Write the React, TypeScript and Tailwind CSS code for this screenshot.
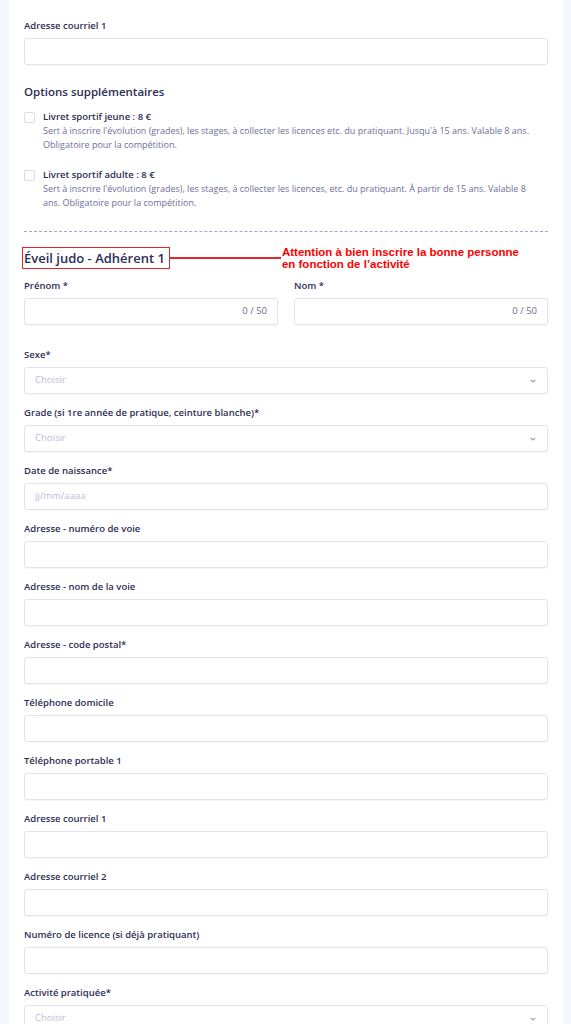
import React from 'react';

const font = { fontFamily: '"Open Sans", "Liberation Sans", sans-serif' };

const Label: React.FC<{ text: string }> = ({ text }) => (
    <div className="text-[9.5px] leading-[14px] font-semibold text-[#2d2d55]">{text}</div>
);

const TextField: React.FC<{ label: string; placeholder?: string; counter?: boolean }> = ({ label, placeholder, counter }) => (
    <div className="flex flex-col gap-[5px]">
        <Label text={label} />
        <div className="h-[27px] rounded-[3px] border border-[#e3e3eb] bg-white flex items-center justify-between px-[10px] shadow-[0_1px_1px_rgba(0,0,0,0.03)]">
            <span className="text-[9.5px] text-[#bcbcd4]">{placeholder}</span>
            {counter && <span className="text-[9.5px] text-[#6c6c8c]">0 / 50</span>}
        </div>
    </div>
);

const SelectField: React.FC<{ label: string }> = ({ label }) => (
    <div className="flex flex-col gap-[5px]">
        <Label text={label} />
        <div className="h-[27px] rounded-[3px] border border-[#e3e3eb] bg-white flex items-center justify-between px-[10px] shadow-[0_1px_1px_rgba(0,0,0,0.03)]">
            <span className="text-[9.5px] text-[#bcbcd4]">Choisir</span>
            <svg width="6" height="4" viewBox="0 0 6 4" className="mr-[1px]">
                <path d="M0.8 0.8 L3 3 L5.2 0.8" fill="none" stroke="#9a9ab4" strokeWidth="1.1" />
            </svg>
        </div>
    </div>
);

const Option: React.FC<{ title: string; lines: string[] }> = ({ title, lines }) => (
    <div className="flex gap-[8px]">
        <div className="mt-[2px] w-[11px] h-[11px] shrink-0 rounded-[2px] border border-[#dcdce8] bg-white" />
        <div className="flex flex-col">
            <div className="text-[9.5px] leading-[14px] font-semibold text-[#2d2d55]">{title}</div>
            {lines.map((l) => (
                <div key={l} className="text-[9px] leading-[14px] text-[#6e6e9c]">{l}</div>
            ))}
        </div>
    </div>
);

const App: React.FC = () => {
    return (
        <div className="min-h-screen bg-[#f5f6fd]" style={font}>
            <div className="ml-[9px] w-[554px] bg-white px-[15px] pt-[19px] pb-[20px]">

                {/* Previous member contact */}
                <TextField label="Adresse courriel 1" />

                {/* Options */}
                <section className="mt-[19px]">
                    <h3 className="text-[11.5px] leading-[16px] font-semibold text-[#2d2d55]">Options supplémentaires</h3>
                    <div className="mt-[10px] flex flex-col gap-[16px]">
                        <Option
                            title="Livret sportif jeune : 8 €"
                            lines={[
                                "Sert à inscrire l'évolution (grades), les stages, à collecter les licences etc. du pratiquant. Jusqu'à 15 ans. Valable 8 ans.",
                                'Obligatoire pour la compétition.',
                            ]}
                        />
                        <Option
                            title="Livret sportif adulte : 8 €"
                            lines={[
                                "Sert à inscrire l'évolution (grades), les stages, à collecter les licences, etc. du pratiquant. À partir de 15 ans. Valable 8",
                                'ans. Obligatoire pour la compétition.',
                            ]}
                        />
                    </div>
                </section>

                <div className="mt-[21px] border-t border-dashed border-[#a3a3d6]" />

                {/* Member heading with annotation */}
                <div className="mt-[14px] flex items-center">
                    <div className="-ml-[2px] border-[1.5px] border-[#e3262c] pl-[1px] pr-[4px] h-[22px] flex items-center">
                        <h2 className="text-[13px] leading-[18px] font-semibold text-[#2d2d55]">Éveil judo - Adhérent 1</h2>
                    </div>
                    <div className="w-[111px] h-[1.5px] bg-[#e3262c]" />
                    <div
                        className="pl-[1px] text-[11.5px] leading-[12px] font-bold text-[#ff0000]"
                        style={{ fontFamily: '"Liberation Sans", Arial, sans-serif' }}
                    >
                        <div>Attention à bien inscrire la bonne personne</div>
                        <div>en fonction de l’activité</div>
                    </div>
                </div>

                <div className="mt-[9px] grid grid-cols-2 gap-x-[16px]">
                    <TextField label="Prénom *" counter />
                    <TextField label="Nom *" counter />
                </div>

                <div className="mt-[23px] flex flex-col gap-[12px]">
                    <SelectField label="Sexe*" />
                    <SelectField label="Grade (si 1re année de pratique, ceinture blanche)*" />
                    <TextField label="Date de naissance*" placeholder="jj/mm/aaaa" />
                    <TextField label="Adresse - numéro de voie" />
                    <TextField label="Adresse - nom de la voie" />
                    <TextField label="Adresse - code postal*" />
                    <TextField label="Téléphone domicile" />
                    <TextField label="Téléphone portable 1" />
                    <TextField label="Adresse courriel 1" />
                    <TextField label="Adresse courriel 2" />
                    <TextField label="Numéro de licence (si déjà pratiquant)" />
                    <SelectField label="Activité pratiquée*" />
                </div>
            </div>
        </div>
    );
};

export default App;
